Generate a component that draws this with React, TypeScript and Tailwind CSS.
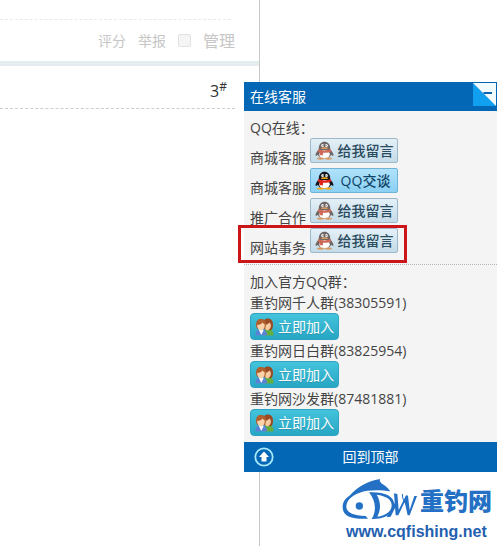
import React from 'react';

const contacts = [
  { label: '商城客服', online: false },
  { label: '商城客服', online: true },
  { label: '推广合作', online: false },
  { label: '网站事务', online: false, marked: true },
];

const groups = ['重钓网千人群(38305591)', '重钓网日白群(83825954)', '重钓网沙发群(87481881)'];

function Penguin({ online }: { online: boolean }) {
  const body = online ? '#14161c' : '#6f6765';
  const scarf = online ? '#e0241c' : '#cf6a58';
  const gold = online ? '#f5a81c' : '#d99a62';
  return (
    <svg width="19" height="19" viewBox="0 0 18 20" preserveAspectRatio="none" aria-hidden="true">
      <path d="M4 9C1.500 11 0 14 .6 15.500c.7.5 1.900-.5 2.400-1.200M14 9c2.500 2 4 5 3.400 6.500-.7.5-1.900-.5-2.400-1.200" fill={body} />
      <ellipse cx="9" cy="12.500" rx="6.700" ry="6" fill={body} />
      <path d="M3.600 7.500C3.600 3.500 6 .8 9 .8s5.400 2.700 5.400 6.700c0 2-2 3-5.400 3s-5.400-1-5.400-3z" fill={body} />
      <ellipse cx="9" cy="14" rx="5" ry="4.500" fill="#fff" />
      <ellipse cx="7.200" cy="4.800" rx="1.300" ry="1.700" fill="#fff" />
      <ellipse cx="10.800" cy="4.800" rx="1.300" ry="1.700" fill="#fff" />
      <circle cx="7.600" cy="5" r=".6" fill="#111" />
      <circle cx="10.400" cy="5" r=".6" fill="#111" />
      <ellipse cx="9" cy="7.500" rx="3.200" ry="1" fill={gold} />
      <path d="M3.200 8.500c3 2 8.600 2 11.600 0l.8 2.300c-3.500 2.200-9.400 2.200-13.200 0z" fill={scarf} />
      <path d="M4.500 10.800l3.300.7-.5 3.700-3-.5z" fill={scarf} />
      <ellipse cx="5.300" cy="18.500" rx="3.500" ry="1.200" fill={gold} />
      <ellipse cx="12.700" cy="18.500" rx="3.500" ry="1.200" fill={gold} />
    </svg>
  );
}

function People() {
  return (
    <svg width="19" height="18" viewBox="0 0 19 18" aria-hidden="true">
      <path d="M9 17.500c0-5 1.500-6.500 4.500-6.500s5 2 5 6.500z" fill="#63ad3c" />
      <path d="M8 6c0-3.500 2-5.500 5-5.500S18 3 18 6.500c0 2.500-.5 4.500-1.500 5.500h-6C9 11 8 8.500 8 6z" fill="#9a4b24" />
      <path d="M9.500 7c1.500 0 4-1 5-2.500 1 1 1.700 2 1.300 4s-2 3.800-3.600 3.800S9.500 10 9.500 7z" fill="#f6c9a0" />
      <path d="M.5 17.500c0-4.500 1.500-6 5.500-6s6 1.500 6 6z" fill="#5a83d8" />
      <path d="M3.800 11.700h5L6.300 17z" fill="#fff" />
      <path d="M1 6.500C1 3 3 1 6 1s5 2 5 5.500c0 2-.7 3.500-1.500 4.500h-7C1.700 10 1 8.500 1 6.500z" fill="#b0602c" />
      <path d="M2.200 7c1.500 0 4.300-.7 5.300-2.500.8 1.200 1.700 1.500 2.300 2 0 3.500-1.800 6-3.800 6S2.200 10 2.200 7z" fill="#fad3ad" />
    </svg>
  );
}

function ContactRow({ label, online, marked }: { label: string; online: boolean; marked?: boolean }) {
  return (
    <li className="relative flex h-[30px] gap-1">
      <span className="self-end leading-5">{label}</span>
      <button
        type="button"
        aria-label={`${label} ${online ? 'QQ交谈' : '给我留言'}`}
        className={`flex h-[25px] w-[88px] items-center rounded-xs border pl-1 font-medium ${
          online
            ? 'border-[#6fb4d8] bg-linear-to-b from-[#b0e2fb] to-[#8bd0f3] text-[#0b4266]'
            : 'border-[#9db9c9] bg-linear-to-b from-[#e4f0f7] to-[#c3dbe8] text-[#2b4b5e]'
        }`}
      >
        <Penguin online={online} />
        <span className="flex-1 text-center leading-5">{online ? 'QQ交谈' : '给我留言'}</span>
      </button>
      {marked && (
        <span className="pointer-events-none absolute -top-[3px] -left-[12px] h-[38px] w-[169px] border-3 border-[#cb1517]" />
      )}
    </li>
  );
}

function ServicePanel() {
  return (
    <aside className="absolute top-[82px] right-px w-[253px] bg-[#f4f4f4] text-sm text-[#444]">
      <header className="flex h-[29px] items-start justify-between bg-[#0367b5] pl-1.5 text-white">
        <h2 className="leading-[30px]">在线客服</h2>
        <button type="button" aria-label="收起" className="mt-px mr-px">
          <svg width="23" height="23" viewBox="0 0 23 23" aria-hidden="true">
            <path d="M0 0v23h23z" fill="#119ff0" />
            <path d="M0 0h23v23z" fill="#f2fcff" />
            <path d="M10.500 10h8.500" stroke="#0864ad" strokeWidth="2" />
          </svg>
        </button>
      </header>
      <section className="border-b border-dotted border-[#b5b5b5] px-1.5 pt-[7px] pb-1.5">
        <h3 className="leading-5">QQ在线：</h3>
        <ul>
          {contacts.map((c, i) => (
            <ContactRow key={i} {...c} />
          ))}
        </ul>
      </section>
      <section className="px-1.5 pt-[7px] pb-1.5">
        <h3 className="leading-5">加入官方QQ群：</h3>
        <ul>
          {groups.map((g) => (
            <li key={g}>
              <p className="leading-[21px]">{g}</p>
              <button
                type="button"
                className="flex h-[27px] w-[89px] items-center gap-1 rounded border border-[#2fa3c0] bg-linear-to-b from-[#43c3dc] to-[#27a6c4] pl-1 text-white"
              >
                <People />
                <span className="leading-5 text-shadow-2xs">立即加入</span>
              </button>
            </li>
          ))}
        </ul>
      </section>
      <a href="#top" className="flex h-[30px] items-center bg-[#0367b5] px-2.5 text-white">
        <svg width="20" height="20" viewBox="0 0 20 20" aria-hidden="true">
          <circle cx="10" cy="10" r="8.700" fill="none" stroke="#a5e8fa" strokeWidth="1.800" />
          <path d="M10 4.500l5 5.500h-2.500v4.500h-5V10H5z" fill="#fff" />
        </svg>
        <span className="flex-1 pr-5 text-center">回到顶部</span>
      </a>
    </aside>
  );
}

function SiteLogo() {
  return (
    <div className="absolute right-1 bottom-1 w-[152px] text-[#2470c4]">
      <div className="flex items-center gap-0.5">
        <svg width="76" height="44" viewBox="316 152 228 132" fill="currentColor" className="shrink-0" aria-hidden="true">
          <path d="M340 204c20-24 52-43 90-49-2 6 1 10 6 14 10 6 18 12 25 23-30-5-68-5-92 4-22 8-38 20-40 40-1 19 18 28 58 30l7 8c-48 2-77-6-76-36 0-14 8-25 22-34z" />
          <circle cx="368" cy="236" r="11" />
          <path
            fillRule="evenodd"
            d="M397 195c44-2 76 10 76 38 0 26-28 43-68 42 15-24 13-54-8-80zM420 202c13 22 13 44 2 66 28-4 43-17 43-34 0-18-16-28-45-32z"
          />
          <path d="M472 198l10 2 4 48 22-44 6 1 5 43 14-42h8l-22 58h-6l-9-40-19 40h-8z" />
          <path d="M450 270l26-46 4 8-18 36z" />
          <path d="M497 200c0 12 4 24 14 34" fill="none" stroke="currentColor" strokeWidth="3" />
        </svg>
        <span className="pt-0.5 text-2xl leading-8 font-black whitespace-nowrap">重钓网</span>
      </div>
      <p className="pl-1 text-base leading-5 font-bold text-[#2460b0] [font-family:'Liberation_Sans',sans-serif]">
        www.cqfishing.net
      </p>
    </div>
  );
}

export default function App() {
  return (
    <div className="relative min-h-screen overflow-hidden bg-white [font-family:'Open_Sans','Noto_Sans_CJK_SC',sans-serif]">
      <main className="min-h-screen w-[260px] border-r border-[#c8c8c8]">
        <div className="mr-7 h-5 border-b border-dashed border-[#e9e9e9]" />
        <div className="flex h-[41px] items-center justify-end gap-3 pr-6 text-sm text-[#c6c6c6]">
          <a href="#rate">评分</a>
          <a href="#report">举报</a>
          <label className="flex items-center gap-3 text-base">
            <input
              type="checkbox"
              className="size-[13px] appearance-none rounded-xs border border-[#e2e2e2] bg-[#f5f5f5]"
            />
            管理
          </label>
        </div>
        <div className="h-[5px] bg-[#e6edf1]" />
        <div className="mr-6 flex h-[43px] items-center justify-end border-b border-dashed border-[#cdcdcd] pt-2 pr-2 text-[#333]">
          <span className="text-base leading-5">3</span>
          <sup className="-top-1 text-xs leading-none">#</sup>
        </div>
      </main>
      <ServicePanel />
      <SiteLogo />
    </div>
  );
}
